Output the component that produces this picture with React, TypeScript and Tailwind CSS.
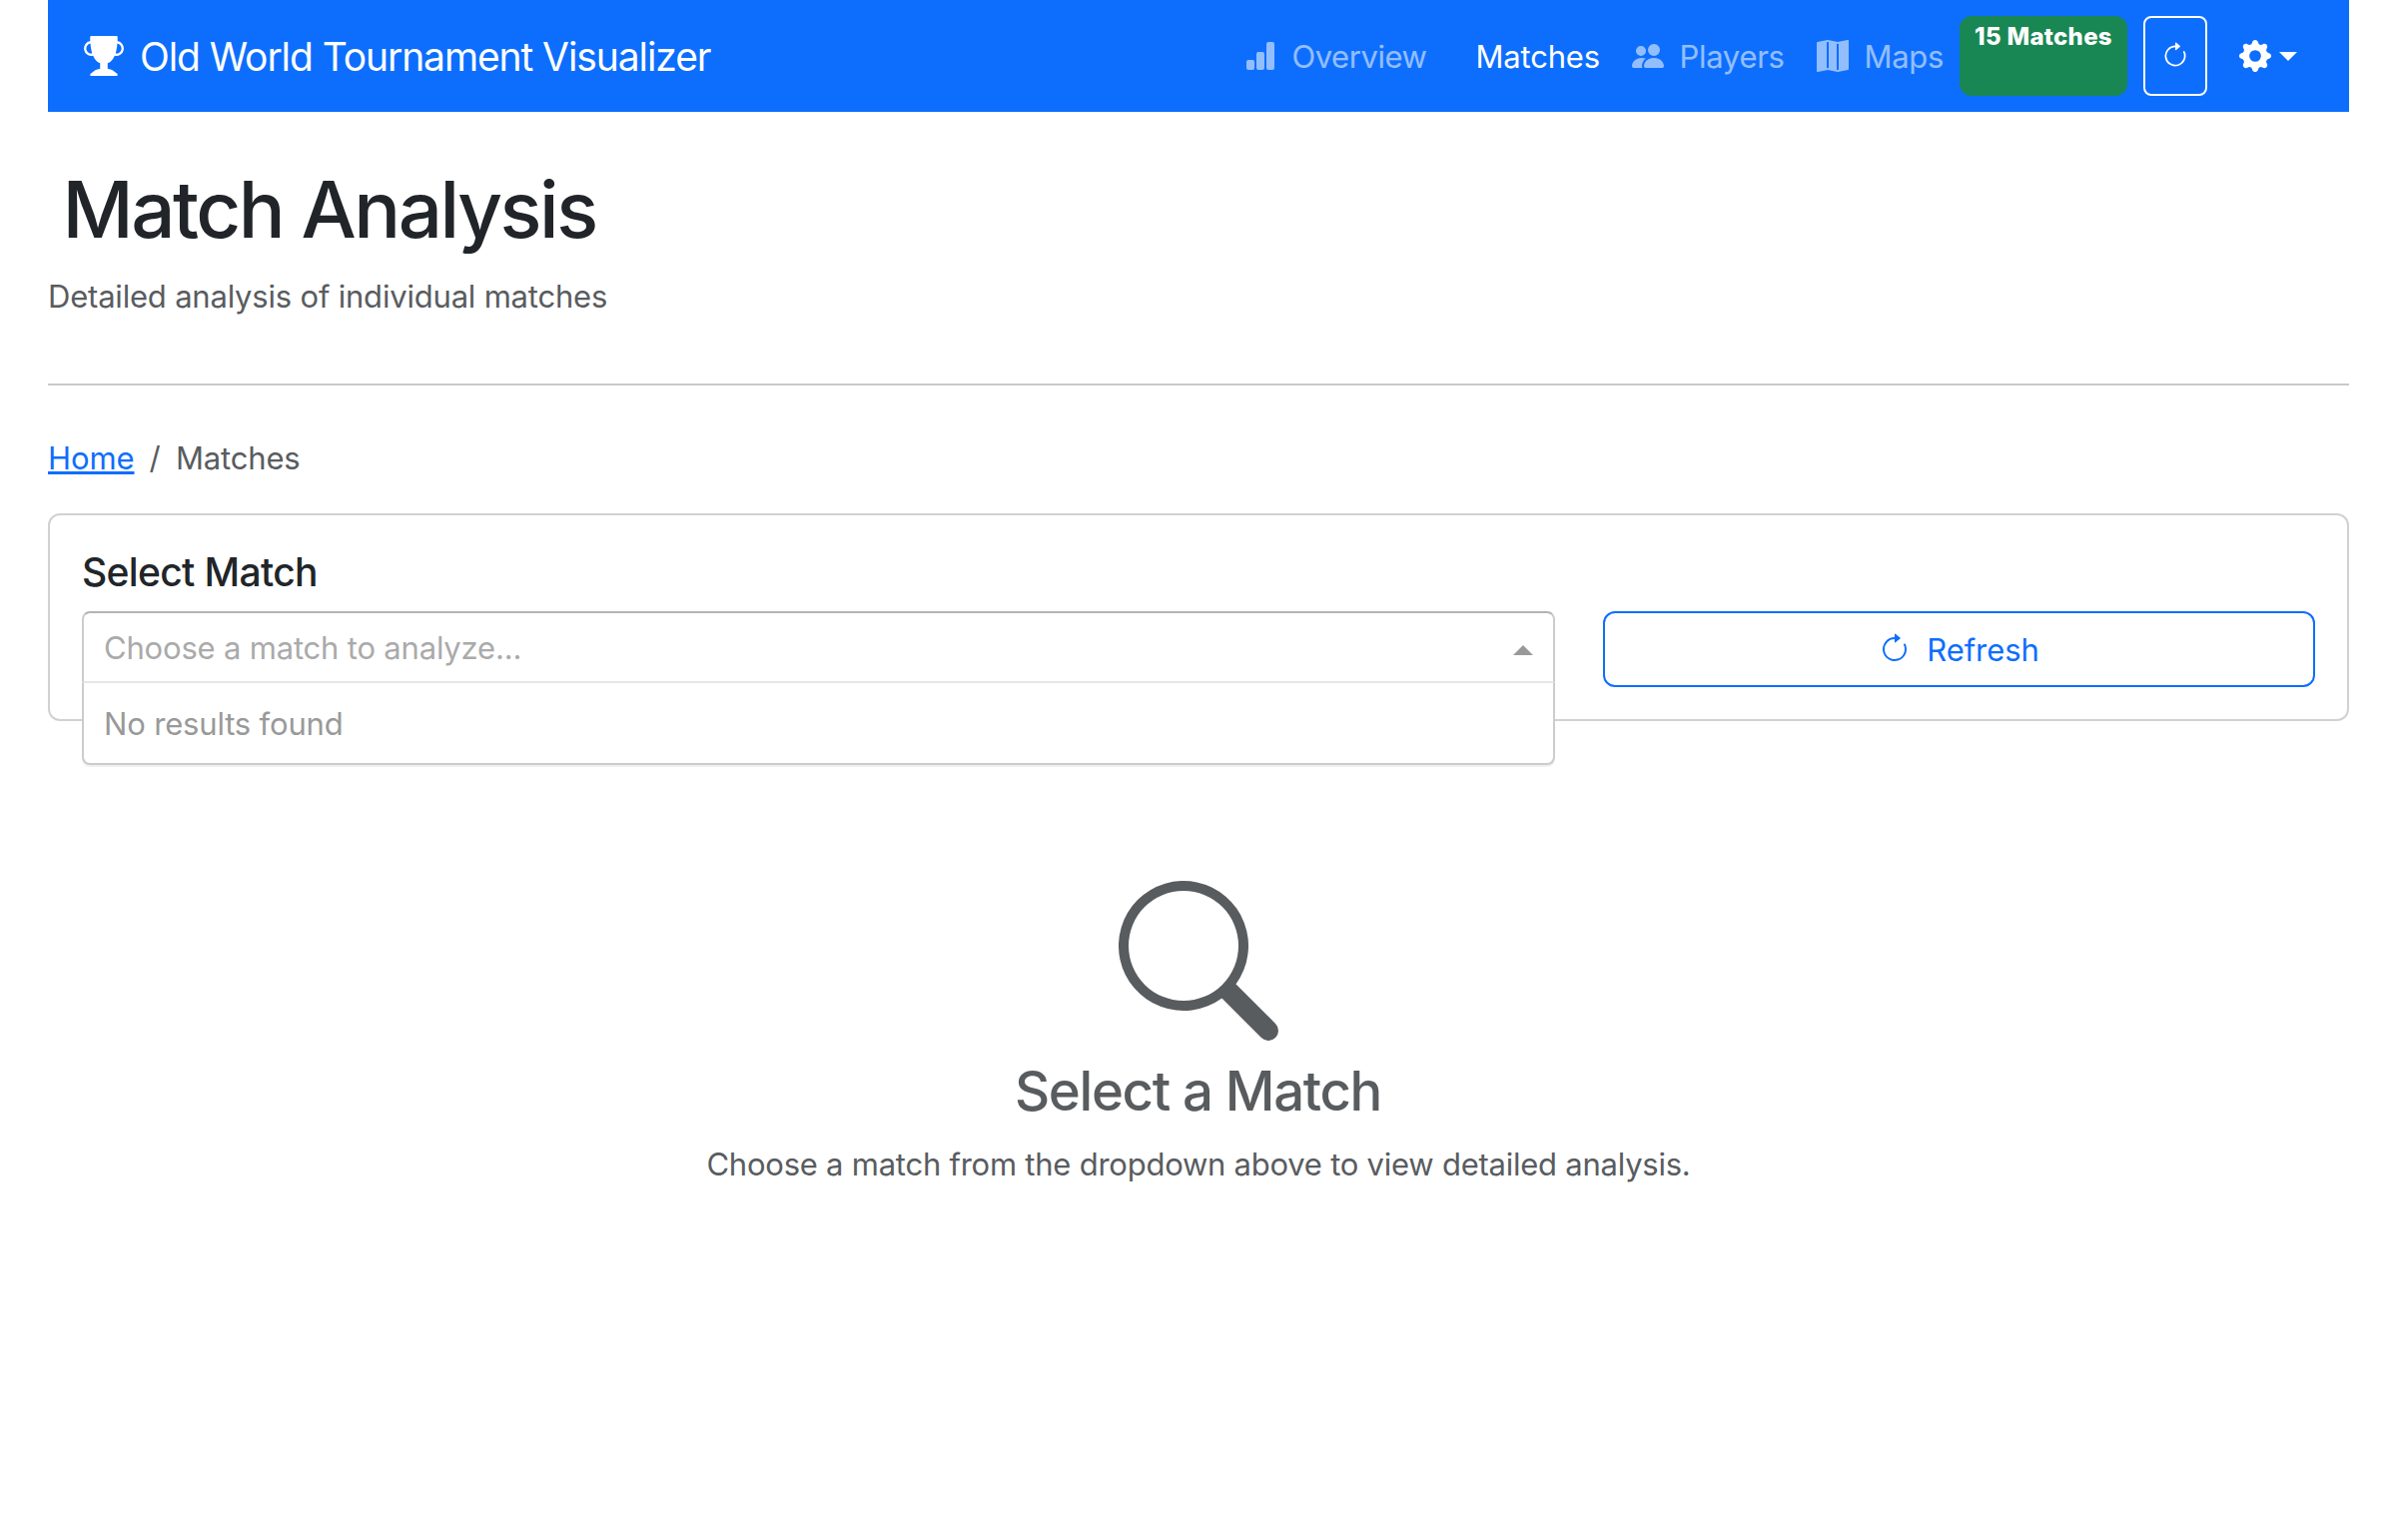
import React from "react";
import {
  BsArrowClockwise,
  BsBarChartFill,
  BsGearFill,
  BsMapFill,
  BsPeopleFill,
  BsSearch,
  BsTrophyFill,
} from "react-icons/bs";

function Navbar() {
  return (
    <header className="flex h-28 items-center bg-[#0d6efd] pl-9 pr-[52px] text-white">
      <BsTrophyFill className="size-10 shrink-0" />
      <span className="ml-4 pt-[2px] text-[39px] leading-[50px] tracking-[-1.09px]">
        Old World Tournament Visualizer
      </span>

      <nav className="ml-auto flex items-center text-[31px] leading-12 text-white/55">
        <a className="flex w-[232px] items-center gap-4">
          <BsBarChartFill className="size-8 shrink-0" />
          <span className="pt-[2px] tracking-[-0.45px]">Overview</span>
        </a>
        <a className="flex w-[156px] items-center text-white">
          <span className="pt-[2px] tracking-[-0.2px]">Matches</span>
        </a>
        <a className="flex w-[185px] items-center gap-4">
          <BsPeopleFill className="size-8 shrink-0" />
          <span className="pt-[2px] tracking-[-0.3px]">Players</span>
        </a>
        <a className="flex w-[143.5px] items-center gap-4">
          <BsMapFill className="size-8 shrink-0" />
          <span className="pt-[2px] tracking-[-0.3px]">Maps</span>
        </a>
      </nav>

      <span className="h-20 w-[168px] rounded-xl bg-[#198754] pt-2 text-center text-[24px] font-extrabold leading-[25px] tracking-[0.3px]">
        15 Matches
      </span>
      <button className="ml-4 flex h-20 w-16 items-center justify-center rounded-lg border-2 border-white">
        <BsArrowClockwise className="size-7" />
      </button>
      <button className="ml-8 flex items-center gap-2">
        <BsGearFill className="size-8" />
        <span className="h-0 w-0 border-x-[9px] border-t-[9px] border-x-transparent border-t-white" />
      </button>
    </header>
  );
}

function MatchDropdown() {
  return (
    <div className="relative h-[72px] w-[1475px] rounded-t-lg border-x-2 border-b-2 border-t-2 border-x-[#cccccc] border-b-[#e6e6e6] border-t-[#b3b3b3] bg-white text-[31px]">
      <div className="flex h-full items-center justify-between pl-5 pr-5 pt-[2px]">
        <span className="tracking-[-0.19px] text-[#aaaaaa]">Choose a match to analyze...</span>
        <span className="mt-[3px] h-0 w-0 border-x-[10px] border-b-[10px] border-x-transparent border-b-[#999999]" />
      </div>
      <div className="absolute -left-0.5 top-[70px] z-10 flex h-[82px] w-[1475px] items-center rounded-b-lg border-x-2 border-b-2 border-[#cccccc] bg-white pl-5 pt-[2px] text-[#999999] shadow-[0_2px_0_rgba(0,0,0,0.06)]">
        <span className="tracking-[-0.17px]">No results found</span>
      </div>
    </div>
  );
}

export default function App() {
  return (
    <div className="flex h-[1542px] w-[2400px] flex-col whitespace-nowrap bg-white px-12 font-['Inter',sans-serif] font-[430] text-[#212529]">
      <Navbar />

      <h1 className="mt-[50px] h-24 pl-[14.5px] text-[78px] font-medium leading-24 tracking-[-2.5px]">
        Match Analysis
      </h1>
      <p className="mt-[15px] h-12 text-[31px] leading-12 tracking-[-0.2px] text-[#595c5f]">
        Detailed analysis of individual matches
      </p>
      <hr className="mt-[63px] h-0 border-t-2 border-[#c8c9ca]" />

      <nav className="mt-[49px] flex h-12 text-[31px] leading-12 text-[#595c5f]">
        <a className="w-[86px] tracking-[-0.1px] text-[#0d6efd] underline decoration-3 underline-offset-2">
          Home
        </a>
        <span className="w-[42px] text-center">/</span>
        <span className="tracking-[-0.17px]">Matches</span>
      </nav>

      <section className="mt-[31px] h-52 rounded-xl border-2 border-[#d0d1d1] px-8 pt-[33px]">
        <h5 className="h-12 text-[39px] font-medium leading-12 tracking-[-0.65px]">Select Match</h5>
        <div className="mt-[15px] flex gap-12">
          <MatchDropdown />
          <button className="flex h-[76px] flex-1 items-center justify-center gap-4 rounded-xl border-2 border-[#0d6efd] text-[31px] text-[#0d6efd]">
            <BsArrowClockwise className="size-8" />
            <span className="pt-[2px] tracking-[-0.1px]">Refresh</span>
          </button>
        </div>
      </section>

      <section className="mt-40 flex flex-col items-center text-[#595c5f]">
        <BsSearch className="size-40" />
        <h4 className="mt-[17px] pr-px text-[54.5px] font-medium leading-[66px] tracking-[-1.35px]">
          Select a Match
        </h4>
        <p className="mt-[17px] text-[31px] leading-12 tracking-[-0.24px]">
          Choose a match from the dropdown above to view detailed analysis.
        </p>
      </section>
    </div>
  );
}
